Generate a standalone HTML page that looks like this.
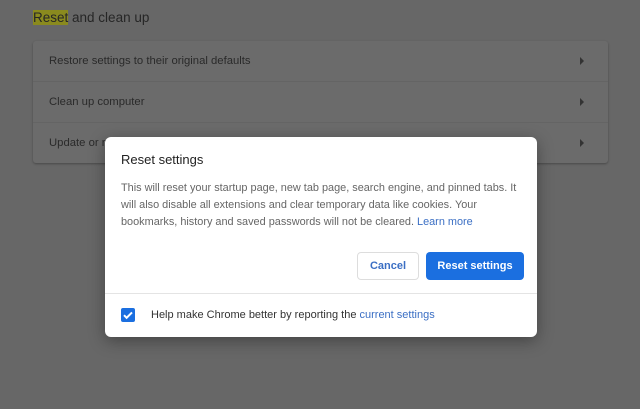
<!DOCTYPE html>
<html><head><style>
*{margin:0;padding:0;box-sizing:border-box}
body{width:640px;height:409px;background:#676767;font-family:"Liberation Sans",sans-serif;position:relative;overflow:hidden}
.h{position:absolute;left:33px;top:10px;font-size:13.5px;color:#262626}
.h span{background:#8a8a1e}
.card{position:absolute;left:33px;top:41px;width:575px;height:122px;background:#6b6b6b;border-radius:3px;box-shadow:0 1px 2px rgba(0,0,0,.3)}
.row{height:41px;border-bottom:1px solid #646464;font-size:11.3px;color:#2a2a2a;padding:14px 0 0 16px;position:relative}
.row:last-child{border:none}
.row:after{content:"";position:absolute;right:24px;top:16px;border-left:4px solid #333;border-top:4px solid transparent;border-bottom:4px solid transparent}
.dlg{position:absolute;left:105px;top:137px;width:432px;height:200px;background:#fff;border-radius:6px;box-shadow:0 4px 16px rgba(0,0,0,.35)}
.t{position:absolute;left:16px;top:15px;font-size:13px;color:#222}
.b{position:absolute;left:16px;top:43px;white-space:nowrap;font-size:10.9px;line-height:17px;color:#666}
a{color:#3b6fc4;text-decoration:none}
.btn{position:absolute;top:115px;height:28px;border-radius:4px;font-size:11px;font-weight:bold;text-align:center;line-height:28px}
.c{left:252px;width:62px;border:1px solid #ddd;color:#3b6fc4;line-height:26px}
.r{left:321px;width:98px;background:#1b6fe0;color:#fff}
.hr{position:absolute;left:0;right:0;top:156px;border-top:1px solid #e4e4e4}
.cb{position:absolute;left:16px;top:171px;width:14px;height:14px;background:#1b6fe0;border-radius:2px}
.f{position:absolute;left:46px;top:172px;font-size:11px;color:#333}
</style></head><body>
<div class="h"><span>Reset</span> and clean up</div>
<div class="card">
<div class="row">Restore settings to their original defaults</div>
<div class="row">Clean up computer</div>
<div class="row">Update or remove</div>
</div>
<div class="dlg">
<div class="t">Reset settings</div>
<div class="b">This will reset your startup page, new tab page, search engine, and pinned tabs. It<br>will also disable all extensions and clear temporary data like cookies. Your<br>bookmarks, history and saved passwords will not be cleared. <a>Learn more</a></div>
<div class="btn c">Cancel</div>
<div class="btn r">Reset settings</div>
<div class="hr"></div>
<div class="cb"><svg width="14" height="14" viewBox="0 0 14 14"><path d="M3 7.2l2.6 2.6L11 4.4" stroke="#fff" stroke-width="2" fill="none"/></svg></div>
<div class="f">Help make Chrome better by reporting the <a>current settings</a></div>
</div>
</body></html>
